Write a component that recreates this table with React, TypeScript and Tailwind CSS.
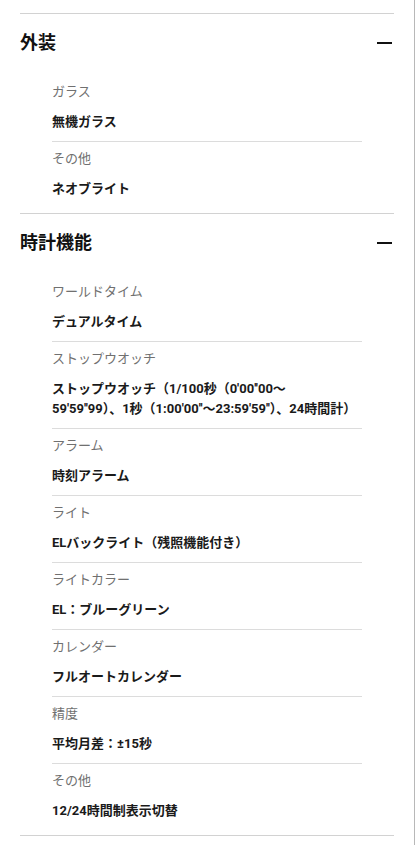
import React from "react";

type Spec = { label: string; value: string };
type Section = { title: string; items: Spec[] };

const sections: Section[] = [
  {
    title: "外装",
    items: [
      { label: "ガラス", value: "無機ガラス" },
      { label: "その他", value: "ネオブライト" },
    ],
  },
  {
    title: "時計機能",
    items: [
      { label: "ワールドタイム", value: "デュアルタイム" },
      {
        label: "ストップウオッチ",
        // break where the reference wraps
        value: "ストップウオッチ（1/100秒（0'00''00～\n59'59''99）、1秒（1:00'00''～23:59'59''）、24時間計）",
      },
      { label: "アラーム", value: "時刻アラーム" },
      { label: "ライト", value: "ELバックライト（残照機能付き）" },
      { label: "ライトカラー", value: "EL：ブルーグリーン" },
      { label: "カレンダー", value: "フルオートカレンダー" },
      { label: "精度", value: "平均月差：±15秒" },
      { label: "その他", value: "12/24時間制表示切替" },
    ],
  },
];

function SpecSection({ section }: { section: Section }) {
  return (
    <section className="border-b border-[#d2d2d2] pb-[5px]">
      <div className="flex items-center justify-between pt-[15px]">
        <h2 className="text-[18px] leading-7 font-bold text-[#111]">{section.title}</h2>
        {/* collapse toggle */}
        <span className="mr-[2px] block h-[2px] w-[15px] bg-[#111]" />
      </div>
      <dl className="mt-[18px] px-8">
        {section.items.map((item, i) => (
          <div
            key={i}
            className={"pt-[7px] pb-[9px] " + (i > 0 ? "border-t border-[#dcdcdc]" : "")}
          >
            <dt className="text-[13px] leading-5 text-[#707070]">{item.label}</dt>
            <dd className="mt-[10px] whitespace-pre-line text-[13px] leading-5 font-bold text-[#1a1a1a]">
              {item.value}
            </dd>
          </div>
        ))}
      </dl>
    </section>
  );
}

export default function App() {
  return (
    <main
      className="min-h-screen w-[416px] bg-white"
      style={{ fontFamily: 'Roboto, "Noto Sans CJK JP", sans-serif' }}
    >
      <div className="min-h-screen w-[415px] border-r border-[#b8b8b8] px-5 pt-[13px]">
        <div className="border-t border-[#d2d2d2]">
          {sections.map((s) => (
            <SpecSection key={s.title} section={s} />
          ))}
        </div>
      </div>
    </main>
  );
}
